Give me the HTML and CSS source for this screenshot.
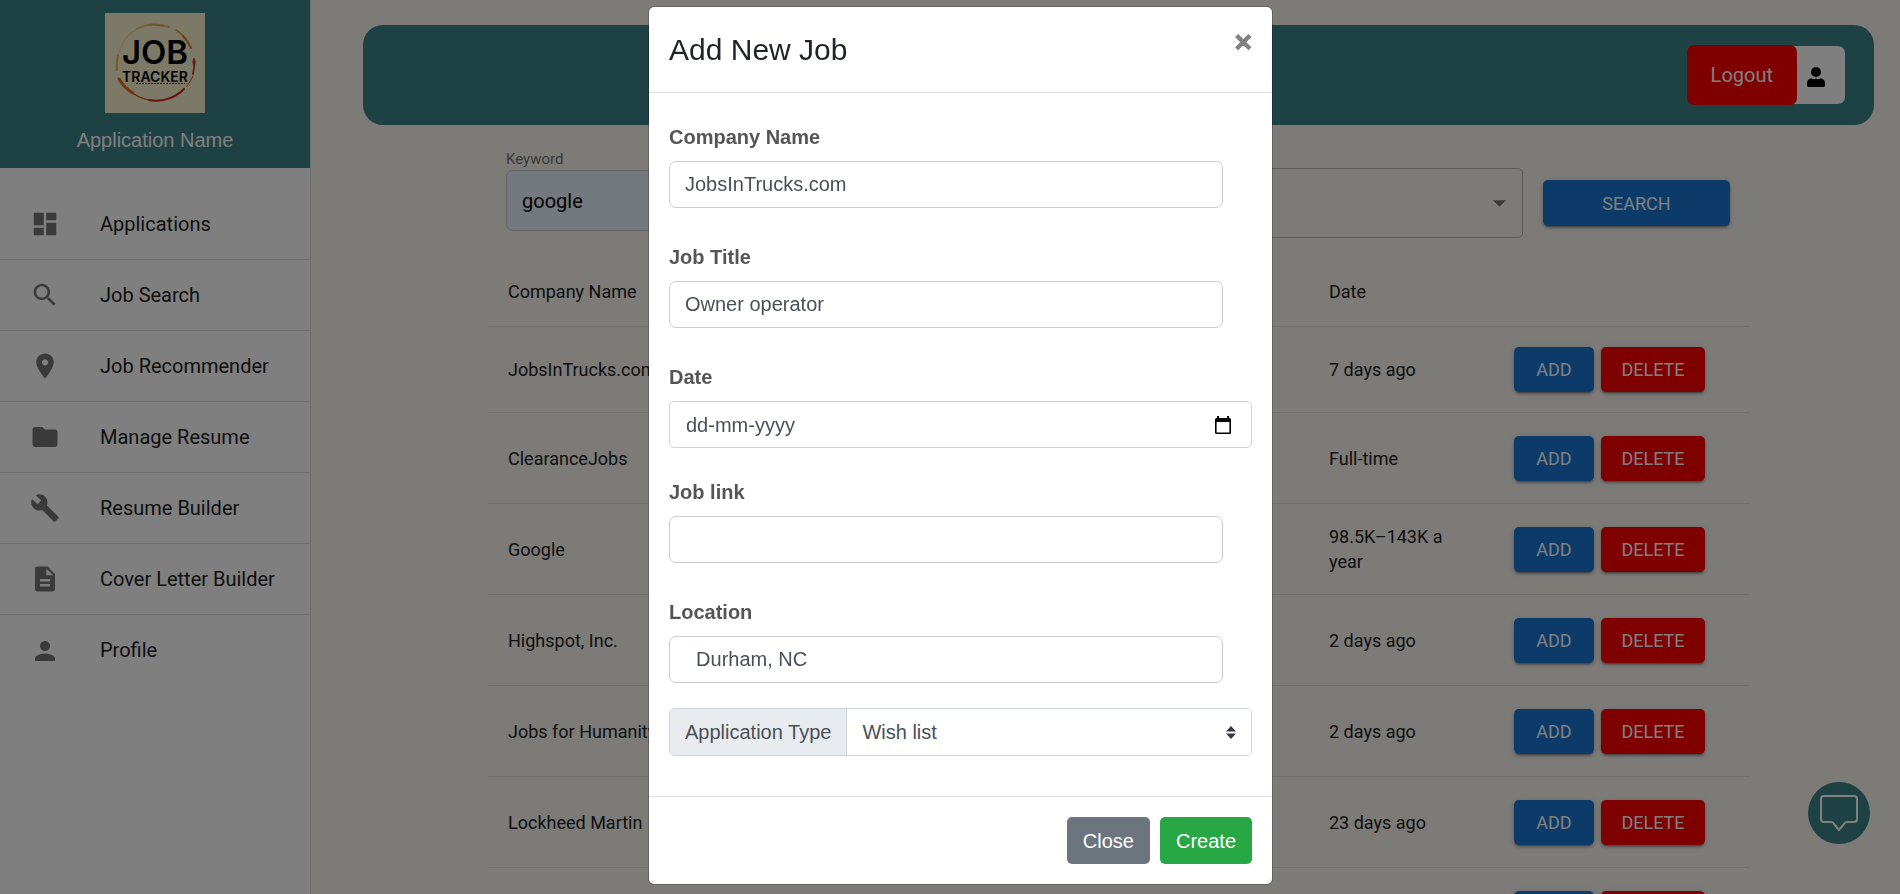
FILE: index.html
```html
<!DOCTYPE html>
<html lang="en">
<head>
<meta charset="utf-8">
<meta name="viewport" content="width=device-width, initial-scale=1">
<title>Job Tracker</title>
<link rel="stylesheet" href="styles.css">
</head>
<body>
<div class="app">
  <aside class="sidebar">
    <div class="brand">
      <svg class="brand-logo" viewBox="0 0 100 100" role="img" aria-label="Job Tracker">
        <rect width="100" height="100" fill="#f8f4cc"/>
        <g fill="none" stroke-linecap="round">
          <path d="M14 39A39 39 0 0 1 34 15" stroke="#f2d9a6" stroke-width="1.500"/>
          <path d="M32 16A39 39 0 0 1 64 14" stroke="#e8c07a" stroke-width="2"/>
          <path d="M44 12A39 39 0 0 1 58 13" stroke="#e0a850" stroke-width="1.500"/>
          <path d="M71 17A39 39 0 0 1 81 26" stroke="#dc9a40" stroke-width="1.500"/>
          <path d="M78 23A39 39 0 0 1 86 35" stroke="#d87a28" stroke-width="2"/>
          <path d="M89 46A39 39 0 0 1 88 61" stroke="#d0402c" stroke-width="2"/>
          <path d="M89 48L89 50" stroke="#d0302c" stroke-width="3"/>
          <path d="M88 63A39 39 0 0 1 82 73" stroke="#d0402c" stroke-width="1"/>
          <path d="M79 76A39 39 0 0 1 44 87" stroke="#d02020" stroke-width="2"/>
          <path d="M44 87A39 39 0 0 1 24 77" stroke="#d85a28" stroke-width="1.500"/>
          <path d="M28 80A39 39 0 0 1 14 66" stroke="#e06a28" stroke-width="3"/>
          <path d="M12 57A39 39 0 0 1 13 42" stroke="#e0b050" stroke-width="2"/>
        </g>
        <text class="logo-job" x="50" y="51" text-anchor="middle">JOB</text>
        <text class="logo-tracker" x="50" y="69" text-anchor="middle">TRACKER</text>
        <path d="M31 70.500H80" stroke="#333" stroke-width="1" stroke-dasharray="2 1"/>
      </svg>
      <div class="brand-name">Application Name</div>
    </div>
    <nav class="nav">
      <a class="nav-item" href="#"><svg class="nav-icon" viewBox="0 0 24 24"><path d="M3 13h8V3H3v10zm0 8h8v-6H3v6zm10 0h8V11h-8v10zm0-18v6h8V3h-8z"/></svg>Applications</a>
      <a class="nav-item" href="#"><svg class="nav-icon" viewBox="0 0 24 24"><path d="M15.500 14h-.79l-.28-.27C15.410 12.590 16 11.110 16 9.500 16 5.910 13.090 3 9.500 3S3 5.910 3 9.500 5.910 16 9.500 16c1.610 0 3.090-.59 4.230-1.570l.27.28v.79l5 4.990L20.490 19l-4.990-5zm-6 0C7.010 14 5 11.990 5 9.500S7.010 5 9.500 5 14 7.010 14 9.500 11.990 14 9.500 14z"/></svg>Job Search</a>
      <a class="nav-item" href="#"><svg class="nav-icon" viewBox="0 0 24 24"><path d="M12 2C8.130 2 5 5.130 5 9c0 5.250 7 13 7 13s7-7.750 7-13c0-3.870-3.130-7-7-7zm0 9.500c-1.380 0-2.500-1.120-2.500-2.500s1.120-2.500 2.500-2.500 2.500 1.120 2.500 2.500-1.120 2.500-2.500 2.500z"/></svg>Job Recommender</a>
      <a class="nav-item" href="#"><svg class="nav-icon" viewBox="0 0 24 24"><path d="M10 4H4c-1.100 0-1.990.9-1.990 2L2 18c0 1.100.9 2 2 2h16c1.100 0 2-.9 2-2V8c0-1.100-.9-2-2-2h-8l-2-2z"/></svg>Manage Resume</a>
      <a class="nav-item" href="#"><svg class="nav-icon" viewBox="0 0 24 24"><path d="M22.700 19l-9.100-9.100c.9-2.300.4-5-1.500-6.900-2-2-5-2.400-7.400-1.300L9 6 6 9 1.600 4.700C.4 7.100.9 10.100 2.900 12.100c1.900 1.900 4.600 2.400 6.900 1.500l9.100 9.100c.4.4 1 .4 1.400 0l2.300-2.300c.5-.4.5-1.100.1-1.400z"/></svg>Resume Builder</a>
      <a class="nav-item" href="#"><svg class="nav-icon" viewBox="0 0 24 24"><path d="M14 2H6c-1.100 0-1.990.9-1.990 2L4 20c0 1.100.89 2 1.990 2H18c1.100 0 2-.9 2-2V8l-6-6zm2 16H8v-2h8v2zm0-4H8v-2h8v2zm-3-5V3.500L18.500 9H13z"/></svg>Cover Letter Builder</a>
      <a class="nav-item" href="#"><svg class="nav-icon" viewBox="0 0 24 24"><path d="M12 12c2.210 0 4-1.790 4-4s-1.790-4-4-4-4 1.790-4 4 1.790 4 4 4zm0 2c-2.670 0-8 1.340-8 4v2h16v-2c0-2.660-5.330-4-8-4z"/></svg>Profile</a>
    </nav>
  </aside>

  <main class="main">
    <header class="topbar">
      <button class="logout" type="button">Logout</button>
      <button class="account" type="button" aria-label="Account">
        <svg class="account-icon" viewBox="0 0 18 20"><ellipse cx="9" cy="5" rx="5" ry="5"/><path d="M4 11.200Q6.500 12.600 9 11.700Q11.500 12.600 14 11.200Q18 12 18 17V18.500Q18 20 16.500 20H1.500Q0 20 0 18.500V17Q0 12 4 11.200Z"/></svg>
      </button>
    </header>

    <section class="content">
      <form class="search">
        <div class="keyword">
          <label class="keyword-label" for="keyword">Keyword</label>
          <input class="keyword-input" id="keyword" type="text" value="google">
        </div>
        <div class="filter">
          <select class="filter-select" aria-label="Location"><option></option></select>
          <svg class="filter-arrow" viewBox="0 0 12 6"><path d="M0 0h12L6 6z"/></svg>
        </div>
        <button class="btn btn-search" type="button">SEARCH</button>
      </form>

      <table class="jobs">
        <colgroup><col class="col-company"><col class="col-date"><col class="col-actions"></colgroup>
        <thead>
          <tr><th scope="col">Company Name</th><th scope="col">Date</th><th></th></tr>
        </thead>
        <tbody>
          <tr class="compact"><td>JobsInTrucks.com</td><td>7 days ago</td><td><div class="actions"><button class="btn" type="button">ADD</button><button class="btn btn-delete" type="button">DELETE</button></div></td></tr>
          <tr><td>ClearanceJobs</td><td>Full-time</td><td><div class="actions"><button class="btn" type="button">ADD</button><button class="btn btn-delete" type="button">DELETE</button></div></td></tr>
          <tr><td>Google</td><td>98.5K–143K a year</td><td><div class="actions"><button class="btn" type="button">ADD</button><button class="btn btn-delete" type="button">DELETE</button></div></td></tr>
          <tr><td>Highspot, Inc.</td><td>2 days ago</td><td><div class="actions"><button class="btn" type="button">ADD</button><button class="btn btn-delete" type="button">DELETE</button></div></td></tr>
          <tr><td>Jobs for Humanity</td><td>2 days ago</td><td><div class="actions"><button class="btn" type="button">ADD</button><button class="btn btn-delete" type="button">DELETE</button></div></td></tr>
          <tr><td>Lockheed Martin</td><td>23 days ago</td><td><div class="actions"><button class="btn" type="button">ADD</button><button class="btn btn-delete" type="button">DELETE</button></div></td></tr>
          <tr><td></td><td></td><td><div class="actions"><button class="btn" type="button" aria-label="Add"></button><button class="btn btn-delete" type="button" aria-label="Delete"></button></div></td></tr>
        </tbody>
      </table>
    </section>
  </main>
</div>

<button class="chat" type="button" aria-label="Open chat">
  <svg class="chat-icon" viewBox="0 0 38 38"><path d="M4 2H34Q37 2 37 5V25Q37 28 34 28H27Q25 28 24 30L19 36L14 30Q13 28 11 28H4Q1 28 1 25V5Q1 2 4 2Z"/></svg>
</button>

<div class="overlay">
  <div class="modal" role="dialog" aria-modal="true" aria-labelledby="modal-title">
    <div class="modal-header">
      <h4 class="modal-title" id="modal-title">Add New Job</h4>
      <button class="modal-close" type="button" aria-label="Close dialog">×</button>
    </div>
    <form class="modal-body">
      <div class="field">
        <label class="field-label" for="company">Company Name</label>
        <input class="field-input" id="company" type="text" value="JobsInTrucks.com">
      </div>
      <div class="field">
        <label class="field-label" for="title">Job Title</label>
        <input class="field-input" id="title" type="text" value="Owner operator">
      </div>
      <div class="field field-date">
        <label class="field-label" for="date">Date</label>
        <div class="date-box">
          <input class="date-input" id="date" type="text" value="dd-mm-yyyy">
          <button class="date-button" type="button" aria-label="Choose date">
            <svg class="date-icon" viewBox="0 0 16 18"><path d="M2 0h2v2h8V0h2v2h0.500Q16 2 16 3.500V16.500Q16 18 14.500 18H1.500Q0 18 0 16.500V3.500Q0 2 1.500 2H2zM1.600 6V16.400H14.400V6z" fill-rule="evenodd"/></svg>
          </button>
        </div>
      </div>
      <div class="field">
        <label class="field-label" for="link">Job link</label>
        <input class="field-input" id="link" type="text">
      </div>
      <div class="field field-last">
        <label class="field-label" for="location">Location</label>
        <input class="field-input" id="location" type="text" value="  Durham, NC">
      </div>
      <div class="type-group">
        <label class="type-label" for="type">Application Type</label>
        <div class="type-box">
          <select class="type-select" id="type"><option>Wish list</option></select>
          <svg class="type-arrows" viewBox="0 0 10 13"><path d="M0 5.500L5 0l5 5.500zM0 7.500h10L5 13z"/></svg>
        </div>
      </div>
    </form>
    <div class="modal-footer">
      <button class="modal-btn modal-btn-close" type="button">Close</button>
      <button class="modal-btn modal-btn-create" type="button">Create</button>
    </div>
  </div>
</div>
</body>
</html>
```

FILE: styles.css
```css
* { box-sizing: border-box; }

body {
  margin: 0;
  height: 100vh;
  overflow: hidden;
  background: #f8f6f1;
  color: #212121;
  font: 18px/25px Roboto, sans-serif;
}

button, input, select { font: inherit; margin: 0; }
button { border: 0; cursor: pointer; }

.app { display: flex; height: 100vh; overflow: hidden; }

/* Sidebar */
.sidebar {
  flex: 0 0 311px;
  background: #fff;
  border-right: 1px solid #e0e0e0;
}
.brand {
  display: flex;
  flex-direction: column;
  align-items: center;
  gap: 12px;
  height: 168px;
  padding-top: 13px;
  background: #3c8289;
  color: #fff;
}
.brand-logo { width: 100px; height: 100px; }
.logo-job { font: 600 33px Inter, sans-serif; }
.logo-tracker { font: 600 14px Inter, sans-serif; }
.brand-name { font: 20px/30px "Liberation Sans", Arial, sans-serif; }

.nav { padding-top: 21px; }
.nav-item {
  display: flex;
  align-items: center;
  gap: 40px;
  height: 71px;
  padding-left: 30px;
  border-bottom: 1px solid #e0e0e0;
  color: #212121;
  font-size: 20px;
  text-decoration: none;
}
.nav-item:last-child { border-bottom: 0; }
.nav-icon { width: 30px; height: 30px; fill: #757575; }

/* Main area */
.main { flex: 1; min-width: 0; padding: 25px 26px 0 52px; }
.topbar {
  display: flex;
  align-items: center;
  justify-content: flex-end;
  height: 100px;
  padding-right: 29px;
  border-radius: 20px;
  background: #3c8289;
}
.logout {
  z-index: 1;
  height: 60px;
  padding: 0 24px;
  border-radius: 7px;
  background: #f00;
  color: #fff;
  font-size: 20px;
}
.account {
  display: flex;
  align-items: center;
  height: 58px;
  margin-left: -10px;
  padding: 4px 20px 0 20px;
  border-radius: 7px;
  background: #fff;
}
.account-icon { width: 18px; height: 20px; }

.content { padding: 0 125px; }

.search {
  display: flex;
  align-items: center;
  gap: 20px;
  height: 131px;
  padding: 25px 19px 0 18px;
}
.keyword {
  display: flex;
  flex: 1;
  flex-direction: column;
  align-self: flex-start;
  gap: 2px;
}
.keyword-label { color: #757575; font-size: 15px; line-height: 18px; }
.keyword-input {
  width: 100%;
  height: 61px;
  padding: 0 15px;
  border: 1px solid #c8c8c8;
  border-radius: 7px;
  background: #e8f0fe;
  color: #000;
  font-size: 20px;
}
.filter { position: relative; flex: 1; }
.filter-select {
  appearance: none;
  display: block;
  width: 100%;
  height: 70px;
  border: 1px solid #b8b7b2;
  border-radius: 5px;
  background: transparent;
}
.filter-arrow {
  position: absolute;
  top: 32px;
  right: 17px;
  width: 13px;
  height: 7px;
  fill: #757575;
  pointer-events: none;
}

.btn {
  height: 45px;
  padding: 0;
  border-radius: 5px;
  background: #1976d2;
  box-shadow: 0 3px 2px -2px rgba(0, 0, 0, .3), 0 2px 3px rgba(0, 0, 0, .2), 0 1px 6px rgba(0, 0, 0, .12);
  color: #fff;
  font-size: 18px;
  font-weight: 400;
}
.btn-search { width: 187px; height: 46px; }

.jobs {
  width: 100%;
  border-collapse: separate;
  border-spacing: 0;
  table-layout: fixed;
}
.col-date { width: 185px; }
.col-actions { width: 255px; }
.jobs th, .jobs td {
  height: 91px;
  padding: 0 20px;
  border-bottom: 1px solid #e0dfdb;
  font-weight: 400;
  text-align: left;
  vertical-align: middle;
}
.jobs th { height: 71px; }
.jobs .compact td { height: 86px; }
.actions { display: flex; gap: 7px; }
.actions .btn { width: 80px; }
.actions .btn-delete { width: 104px; background: #f00; }

.chat {
  position: fixed;
  right: 30px;
  bottom: 50px;
  display: flex;
  align-items: center;
  justify-content: center;
  width: 62px;
  height: 62px;
  padding: 0;
  border-radius: 50%;
  background: #3c8289;
}
.chat-icon { width: 38px; height: 38px; fill: none; stroke: #fff; stroke-width: 2; stroke-linejoin: round; }

/* Dialog */
.overlay {
  position: fixed;
  inset: 0;
  z-index: 10;
  display: flex;
  align-items: flex-start;
  justify-content: center;
  padding: 6px 0 0 21px;
  background: rgba(0, 0, 0, .5);
  font-family: "Liberation Sans", Arial, sans-serif;
}
.modal {
  width: 625px;
  border: 1px solid rgba(0, 0, 0, .2);
  border-radius: 6px;
  background: #fff;
  background-clip: padding-box;
  font-size: 20px;
  line-height: 30px;
}
.modal-header {
  display: flex;
  align-items: flex-start;
  justify-content: space-between;
  padding: 20px;
  border-bottom: 1px solid #dee2e6;
}
.modal-title { margin: 0; color: #212529; font-size: 30px; font-weight: 400; line-height: 45px; }
.modal-close {
  padding: 0;
  background: none;
  color: #808080;
  font-size: 30px;
  font-weight: 700;
  line-height: 30px;
  -webkit-text-stroke: 1px #808080;
}
.modal-body { padding: 29px 20px 40px; }
.field { display: flex; flex-direction: column; gap: 9px; margin-bottom: 34px; }
.field-date { margin-bottom: 29px; }
.field-last { margin-bottom: 25px; }
.field-label { color: #555; font-weight: 700; }
.field-input {
  width: 95%;
  height: 47px;
  padding: 0 15px;
  border: 1px solid #ccc;
  border-radius: 7px;
  background: #fff;
  color: #495057;
}
.date-box {
  display: flex;
  align-items: center;
  height: 47px;
  padding: 0 20px 0 16px;
  border: 1px solid #ced4da;
  border-radius: 5px;
}
.date-input { flex: 1; min-width: 0; padding: 0; border: 0; background: none; color: #495057; }
.date-button { display: flex; padding: 0; background: none; }
.date-icon { width: 16px; height: 18px; }

.type-group {
  display: flex;
  height: 48px;
  border: 1px solid #ced4da;
  border-radius: 5px;
  overflow: hidden;
}
.type-label {
  padding: 8px 15px;
  border-right: 1px solid #ced4da;
  background: #e9ecef;
  color: #495057;
}
.type-box { position: relative; flex: 1; }
.type-select {
  appearance: none;
  width: 100%;
  height: 100%;
  padding: 0 15px;
  border: 0;
  background: #fff;
  color: #495057;
}
.type-arrows {
  position: absolute;
  top: 17px;
  right: 15px;
  width: 10px;
  height: 13px;
  fill: #343a40;
  pointer-events: none;
}

.modal-footer {
  display: flex;
  justify-content: flex-end;
  gap: 10px;
  padding: 20px;
  border-top: 1px solid #dee2e6;
}
.modal-btn { height: 47px; padding: 0 16px; border-radius: 5px; color: #fff; }
.modal-btn-close { background: #6c757d; }
.modal-btn-create { background: #28a745; }
```
